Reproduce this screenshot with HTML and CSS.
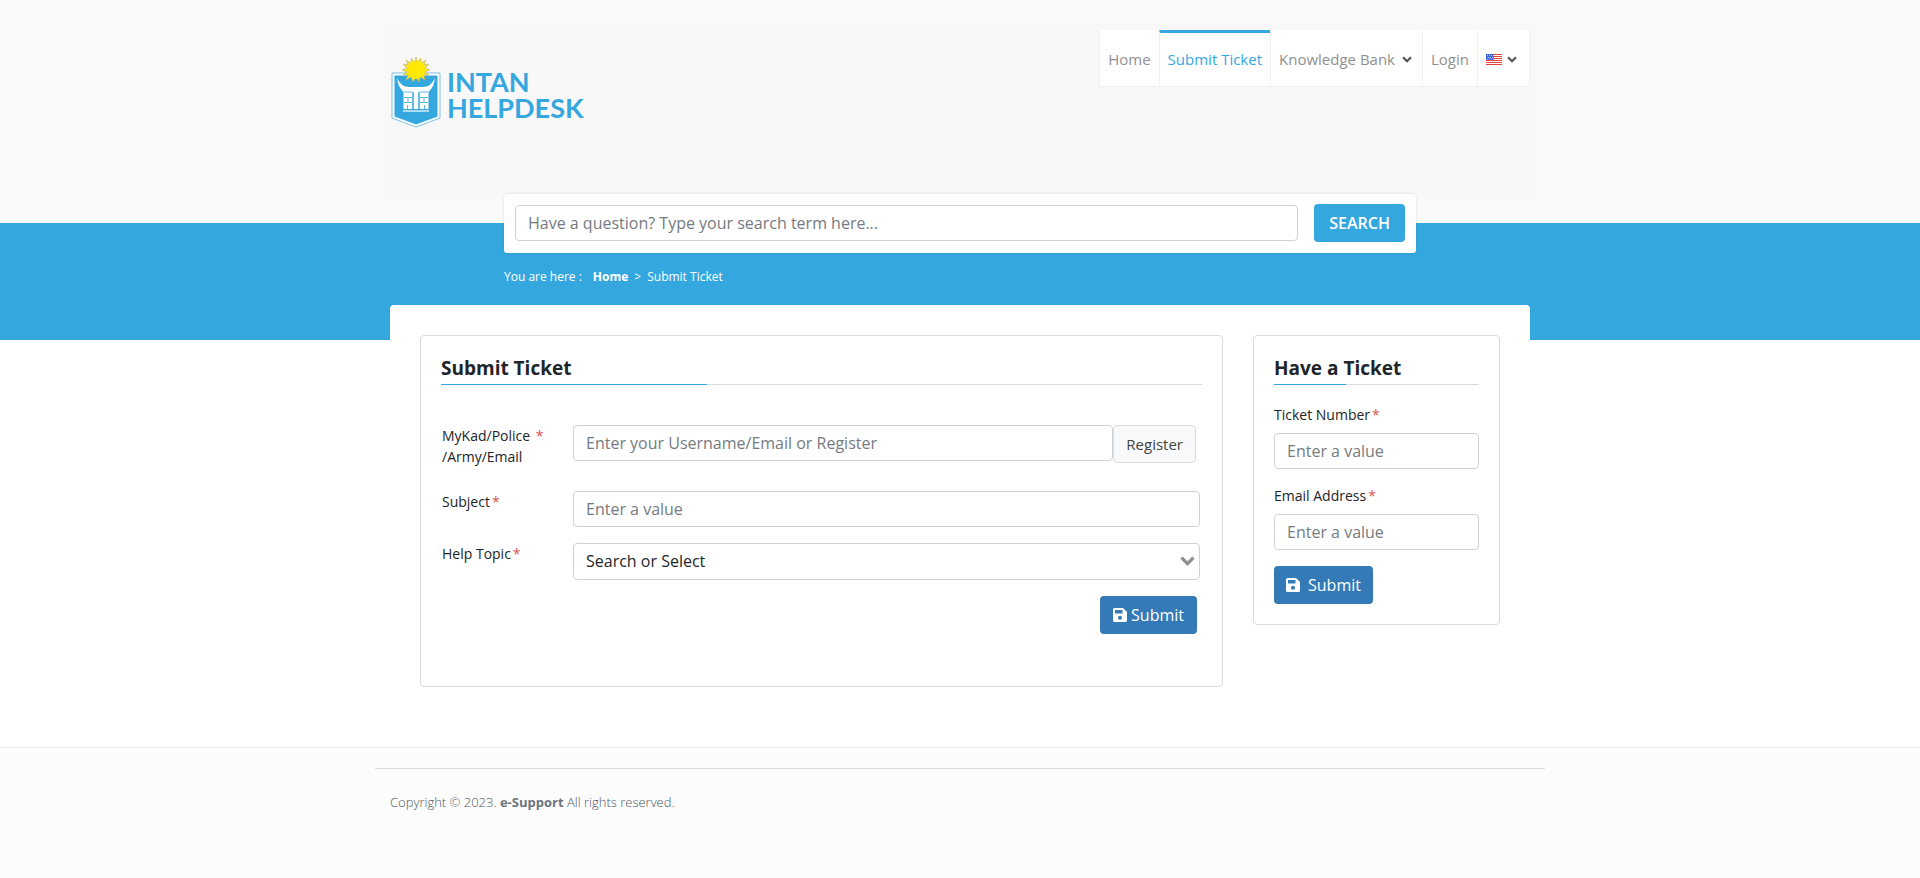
FILE: index.html
```html
<!DOCTYPE html>
<html lang="en">
<head>
<meta charset="utf-8">
<meta name="viewport" content="width=device-width, initial-scale=1">
<title>Submit Ticket - INTAN Helpdesk</title>
<link rel="stylesheet" href="styles.css">
</head>
<body>
<svg class="defs" width="0" height="0" aria-hidden="true">
  <symbol id="save" viewBox="0 0 14 14"><path fill-rule="evenodd" d="M1.500 0H10L14 4V12.500Q14 14 12.500 14H1.500Q0 14 0 12.500V1.500Q0 0 1.500 0ZM2 2V5.500H9.500V2ZM7 7.700A2 2 0 1 0 7 11.700A2 2 0 1 0 7 7.700Z"/></symbol>
  <symbol id="chevron" viewBox="0 0 10 7"><path d="M1 1.200L5 5.200L9 1.200" fill="none" stroke="currentColor" stroke-width="2.200"/></symbol>
</svg>
<header class="site-header">
  <div class="header-inner">
    <a class="logo" href="#">
      <svg class="crest" viewBox="0 0 50 74" aria-hidden="true">
        <path d="M1 18H49V63L25 72L1 63Z" fill="#fff" stroke="#7cbfe2"/>
        <path d="M3.500 20.500H46.500V61.500L25 69.500L3.500 61.500Z" fill="#35a7df"/>
        <path d="M6 23Q10 32 18 32H32Q40 32 44 23Q43 32 37.500 37V54H12.500V37Q7 32 6 23Z" fill="#fff"/>
        <path d="M22 37V54M28 37V54" stroke="#35a7df" stroke-width="1.500"/>
        <path d="M13 37H21M29 37H37M13 42.500H21M29 42.500H37M13 47.500H21M29 47.500H37M16.500 50V54M33.500 50V54M17 43V47M33 43V47" stroke="#35a7df" stroke-width=".8"/>
        <path d="M12 56H38" stroke="#d5edf8" stroke-width="1.500"/>
        <path d="M25 2L26.500 7L30 3L30 8L35 5L33 10L38 9L34 13L39 15L34 17L38 20L33 20L34 25L29 22L28 27L25 22L22 27L20 22L15 25L17 20L12 20L16 17L11 15L16 13L12 9L17 10L15 5L20 8L20 3L23.500 7Z" fill="#f5e52a" stroke="#b7a96a" stroke-width=".5"/>
        <circle cx="25" cy="15" r="9" fill="#ffe900"/>
      </svg>
      <span class="logo-name">INTAN<br>HELPDESK</span>
    </a>
    <nav class="main-nav">
      <a href="#">Home</a>
      <a class="active" href="#">Submit Ticket</a>
      <a class="has-menu" href="#">Knowledge Bank <svg class="caret"><use href="#chevron"/></svg></a>
      <a href="#">Login</a>
      <a href="#" aria-label="Language">
        <svg class="flag" viewBox="0 0 16 11"><path fill="#fff" d="M0 0h16v11H0z"/><path d="M0 .5h16M0 2.500h16M0 4.500h16M0 6.500h16M0 8.500h16M0 10.500h16" stroke="#e8413e"/><path fill="#3c63d8" d="M0 0h8v6H0z"/><path d="M1 1.500h7M2 3.500h6M1 5h7" stroke="#dce6ff" stroke-width=".8" stroke-dasharray="1 1"/></svg>
        <svg class="caret"><use href="#chevron"/></svg>
      </a>
    </nav>
  </div>
</header>
<section class="band">
  <div class="band-inner">
    <form class="search" role="search">
      <input class="field" type="search" aria-label="Search" placeholder="Have a question? Type your search term here...">
      <button class="search-btn" type="button">SEARCH</button>
    </form>
    <nav class="breadcrumb" aria-label="Breadcrumb"><span>You are here :</span><a href="#">Home</a><span>&gt;</span><span>Submit Ticket</span></nav>
  </div>
</section>
<main class="page">
  <section class="card ticket">
    <h2>Submit Ticket</h2>
    <form class="ticket-form">
      <div class="row row-user">
        <label for="user">MyKad/Police <b class="req">*</b><br>/Army/Email</label>
        <div class="user-group"><input class="field" id="user" type="text" placeholder="Enter your Username/Email or Register"><button class="register" type="button">Register</button></div>
      </div>
      <div class="row">
        <label for="subject">Subject<b class="req">*</b></label>
        <input class="field" id="subject" type="text" placeholder="Enter a value">
      </div>
      <div class="row">
        <label for="topic">Help Topic<b class="req">*</b></label>
        <div class="select"><select class="field" id="topic"><option>Search or Select</option></select><svg class="select-arrow"><use href="#chevron"/></svg></div>
      </div>
      <button class="submit" type="button"><svg class="save"><use href="#save"/></svg>Submit</button>
    </form>
  </section>
  <aside class="card lookup">
    <h2>Have a Ticket</h2>
    <form class="lookup-form">
      <label for="number">Ticket Number<b class="req">*</b></label>
      <input class="field" id="number" type="text" placeholder="Enter a value">
      <label for="email">Email Address<b class="req">*</b></label>
      <input class="field" id="email" type="email" placeholder="Enter a value">
      <button class="submit submit-wide" type="button"><svg class="save"><use href="#save"/></svg>Submit</button>
    </form>
  </aside>
</main>
<footer class="site-footer">
  <div class="footer-inner"><p>Copyright © 2023. <strong>e-Support</strong> All rights reserved.</p></div>
</footer>
</body>
</html>
```
FILE: styles.css
```css
* { box-sizing: border-box; }
body {
  margin: 0;
  min-height: 100vh;
  display: flex;
  flex-direction: column;
  background: #fff;
  color: #212529;
  font: 14px/21px "Open Sans", sans-serif;
}
button, input, select { font: inherit; color: inherit; }
a { color: inherit; text-decoration: none; }
svg { flex: none; }
.defs { position: absolute; }

.site-header { background: #fafafa; padding: 24px 16px; }
.header-inner {
  max-width: 1152px;
  min-height: 175px;
  margin: 0 auto;
  padding: 6px;
  display: flex;
  justify-content: space-between;
  align-items: flex-start;
  background: #f8f8f8;
}
.logo { display: flex; gap: 6px; margin-top: 25px; padding-left: 1px; }
.crest { width: 50px; height: 74px; }
.logo-name {
  padding-top: 14px;
  color: #35a7df;
  font: 700 27px/26px Lato, sans-serif;
}
.main-nav {
  display: flex;
  background: #fff;
  border: 1px solid #f0f0f0;
  border-top: 0;
  color: #909090;
  font-size: 15px;
}
.main-nav a {
  display: flex;
  align-items: center;
  gap: 5px;
  height: 56px;
  padding: 0 8px;
  border-top: 3px solid transparent;
  border-left: 1px solid #f0f0f0;
}
.main-nav a:first-child { border-left: 0; }
.main-nav a.active { border-top-color: #35a7df; color: #35a7df; }
.main-nav a.has-menu { gap: 7px; padding-right: 10px; }
.main-nav a:last-child { padding-right: 12px; }
.caret { width: 10px; height: 7px; color: #555; }
.flag { width: 16px; height: 11px; }

.band { height: 117px; background: #35a7df; padding: 0 16px; }
.band-inner { max-width: 912px; margin: -29px auto 0; position: relative; }
.search {
  display: flex;
  align-items: center;
  gap: 16px;
  padding: 10px 11px 11px;
  background: #fff;
  border-radius: 3px;
  box-shadow: 0 0 3px rgba(0, 0, 0, .12);
}
.field {
  width: 100%;
  min-width: 0;
  height: 36px;
  padding: 0 12px;
  border: 1px solid #d0d2d4;
  border-radius: 4px;
  background: #fff;
  font-size: 16px;
  appearance: none;
}
.field::placeholder { color: #757b81; opacity: 1; }
.search-btn {
  height: 38px;
  padding: 0 15px;
  border: 0;
  border-radius: 4px;
  background: #35a7df;
  color: #fff;
  font-size: 16px;
  font-weight: 600;
}
.breadcrumb { display: flex; gap: 6px; margin-top: 13px; color: #fff; font-size: 12px; }
.breadcrumb a { margin-left: 5px; font-weight: 700; }

.page {
  position: relative;
  width: 100%;
  max-width: 1140px;
  margin: -35px auto 0;
  padding: 30px 30px 60px;
  display: grid;
  grid-template-columns: minmax(0, 803fr) minmax(0, 247fr);
  gap: 30px;
  align-items: start;
  background: #fff;
  border-radius: 4px;
}
.card { padding: 20px; border: 1px solid #d9dadb; border-radius: 4px; }
h2 {
  position: relative;
  margin: 0;
  padding-bottom: 4px;
  border-bottom: 1px solid #d9dadb;
  font-size: 19px;
  line-height: 24px;
  font-weight: 700;
}
h2::after {
  content: "";
  position: absolute;
  left: 0;
  bottom: -1px;
  width: 35%;
  height: 1px;
  background: #35a7df;
}
.req { color: #d9534f; font-weight: 400; margin-left: 2px; }
.ticket-form { padding: 40px 2px 32px 1px; display: flex; flex-direction: column; gap: 16px; }
.row { display: grid; grid-template-columns: 131px minmax(0, 1fr); align-items: start; }
.row-user { margin-bottom: 8px; }
.user-group { display: flex; align-items: flex-start; padding-right: 4px; }
.register {
  height: 38px;
  padding: 0 12px;
  border: 1px solid #dcdfe2;
  border-radius: 4px;
  background: #f8f9fa;
  color: #444;
  font-size: 15px;
}
.select { position: relative; }
.select .field { height: 37px; display: block; }
.select-arrow {
  position: absolute;
  right: 5px;
  top: 12px;
  width: 15px;
  height: 12px;
  color: #909090;
  pointer-events: none;
}
.submit {
  display: flex;
  align-items: center;
  gap: 4px;
  height: 38px;
  padding: 0 13px;
  align-self: flex-end;
  margin-right: 3px;
  border: 0;
  border-radius: 4px;
  background: #337ab7;
  color: #fff;
  font-size: 16px;
}
.save { width: 14px; height: 14px; fill: currentColor; }
.submit-wide { gap: 8px; padding: 0 12px; align-self: flex-start; }
.lookup-form { padding-top: 19px; display: flex; flex-direction: column; }
.lookup-form label { margin-bottom: 8px; }
.lookup-form .field { margin-bottom: 16px; }

.site-footer { flex: 1; padding: 20px 16px; background: #fcfcfc; border-top: 1px solid #ebebeb; }
.footer-inner {
  max-width: 1170px;
  margin: 0 auto;
  padding: 23px 15px;
  border-top: 1px solid #dcdcdc;
  color: #4c565f;
  font-size: 13px;
  font-weight: 300;
}
.footer-inner p { margin: 0; }
.footer-inner strong { color: #6c757d; font-weight: 700; }
```
